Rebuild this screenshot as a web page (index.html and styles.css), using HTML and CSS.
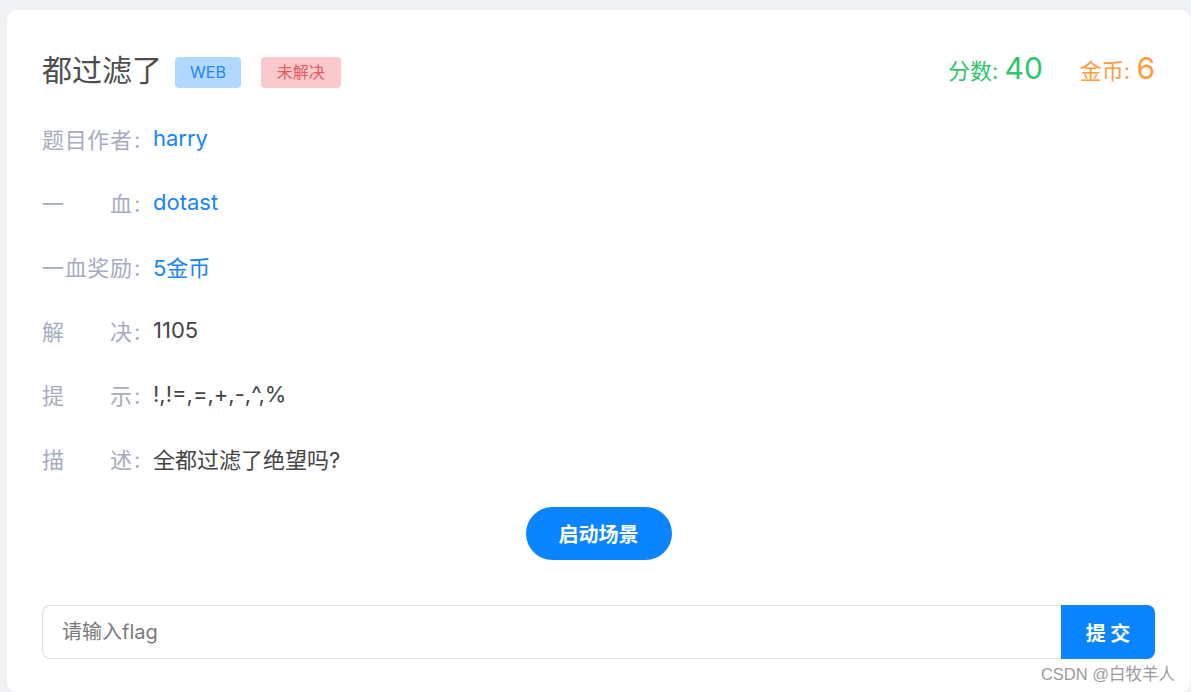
FILE: index.html
```html
<!DOCTYPE html>
<html lang="zh-CN">
<head>
    <meta charset="UTF-8">
    <meta name="viewport" content="width=device-width, initial-scale=1.0">
    <title>都过滤了</title>
    <link rel="stylesheet" href="styles.css">
</head>
<body>
    <!-- 题目卡片 -->
    <div class="card">
        <div class="card-head">
            <div class="title-wrap">
                <h2 class="title">都过滤了</h2>
                <span class="tag tag-web">WEB</span>
                <span class="tag tag-todo">未解决</span>
            </div>
            <div class="scores">
                <span class="score">分数: <b>40</b></span>
                <span class="coin">金币: <b>6</b></span>
            </div>
        </div>

        <div class="info">
            <div class="row"><span class="key"><span class="key-text">题目作者</span>:</span><span class="val link">harry</span></div>
            <div class="row"><span class="key"><span class="key-text">一血</span>:</span><span class="val link">dotast</span></div>
            <div class="row"><span class="key"><span class="key-text">一血奖励</span>:</span><span class="val link">5金币</span></div>
            <div class="row"><span class="key"><span class="key-text">解决</span>:</span><span class="val">1105</span></div>
            <div class="row"><span class="key"><span class="key-text">提示</span>:</span><span class="val">!,!=,=,+,-,^,%</span></div>
            <div class="row"><span class="key"><span class="key-text">描述</span>:</span><span class="val">全都过滤了绝望吗?</span></div>
        </div>

        <div class="actions">
            <button class="btn-start">启动场景</button>
        </div>

        <div class="flag-form">
            <input class="flag-input" type="text" placeholder="请输入flag">
            <button class="btn-submit">提 交</button>
        </div>

        <span class="watermark">CSDN @白牧羊人</span>
    </div>
</body>
</html>
```

FILE: styles.css
```css
/* Página */
body {
    margin: 0;
    padding: 10px 1px 0 7px;
    background-color: #f0f2f5;
    font-family: "Inter", "Noto Sans CJK SC", sans-serif;
    color: #444;
}

/* Cartão */
.card {
    position: relative;
    background-color: #fff;
    border-radius: 10px;
    padding: 35px 35px 32px 35px;
    height: 682px;
    box-sizing: border-box;
}

.card-head {
    display: flex;
    justify-content: space-between;
    align-items: center;
    height: 46px;
    margin-bottom: 15px;
}

.title-wrap {
    display: flex;
    align-items: center;
}

.title {
    margin: 0 13px 0 0;
    font-size: 30px;
    font-weight: normal;
    color: #4d4d4d;
}

.tag {
    display: inline-block;
    height: 31px;
    line-height: 31px;
    margin-top: 8px;
    padding: 0 15px;
    border-radius: 4px;
    font-size: 16px;
}

.tag-web {
    background-color: #b3d8ff;
    color: #1a87f5;
}

.tag-todo {
    margin-left: 20px;
    padding: 0 16px;
    background-color: #fac9cc;
    color: #e5595f;
}

.scores {
    display: flex;
    align-items: baseline;
    gap: 37px;
    font-size: 22px;
}

.scores b {
    font-weight: normal;
    font-size: 30px;
}

.score {
    color: #2ec56c;
}

.coin {
    color: #ff9b3e;
}

/* Linhas de informação */
.row {
    display: flex;
    align-items: center;
    height: 64px;
    font-size: 22px;
}

.key {
    width: 111px;
    flex-shrink: 0;
    color: #a6abc2;
}

.key-text {
    display: inline-block;
    width: 90px;
    text-align: justify;
    text-align-last: justify;
    margin-right: 2px;
}

.val {
    color: #444;
}

.val.link {
    color: #1684fc;
}

/* Botões */
.actions {
    display: flex;
    justify-content: center;
    margin-top: 17px;
}

.btn-start {
    height: 53px;
    padding: 0 33px;
    border: none;
    border-radius: 27px;
    background-color: #0a84ff;
    color: #fff;
    font-family: "Noto Sans CJK SC", sans-serif;
    font-size: 20px;
    font-weight: bold;
}

.flag-form {
    display: flex;
    margin-top: 45px;
    height: 54px;
}

.flag-input {
    flex: 1;
    border: 1px solid #dcdfe6;
    border-right: none;
    border-radius: 8px 0 0 8px;
    padding: 0 19px;
    font-family: "Inter", "Noto Sans CJK SC", sans-serif;
    font-size: 20px;
    color: #444;
    outline: none;
}

.flag-input::placeholder {
    color: #7a7a7a;
}

.btn-submit {
    width: 94px;
    border: none;
    border-radius: 0 8px 8px 0;
    background-color: #0a84ff;
    color: #fff;
    font-family: "Noto Sans CJK SC", sans-serif;
    font-size: 20px;
    font-weight: bold;
}

/* Marca d'água */
.watermark {
    position: absolute;
    right: 15px;
    bottom: 7px;
    font-family: "Liberation Sans", "Noto Sans CJK SC", sans-serif;
    font-size: 16.5px;
    color: #9b9b9b;
}
```
